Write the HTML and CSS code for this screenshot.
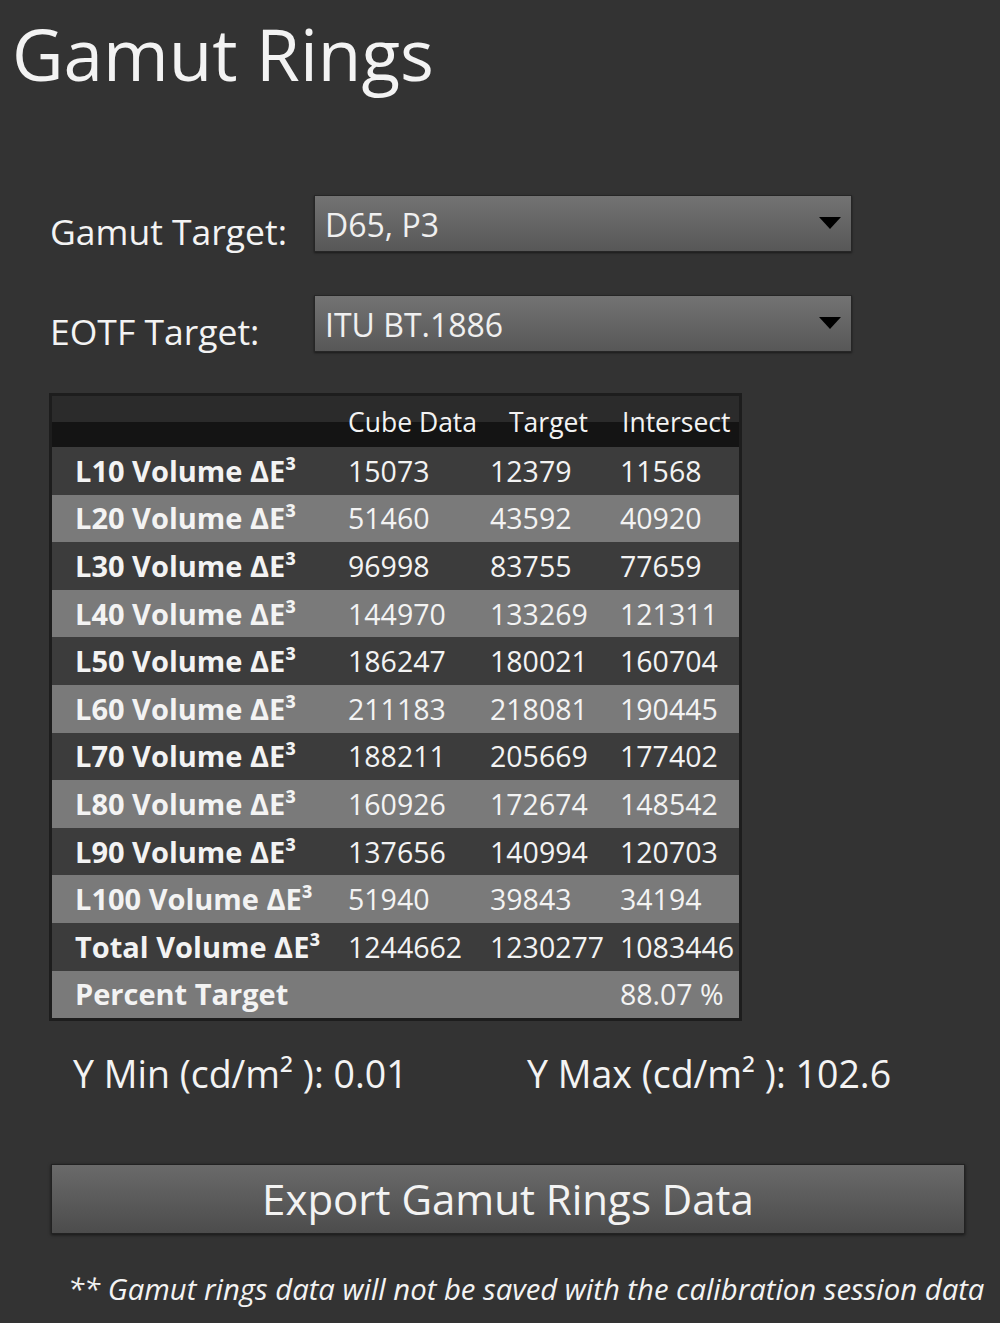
FILE: index.html
```html
<!DOCTYPE html>
<html>
<head>
<meta charset="utf-8">
<link rel="stylesheet" href="styles.css">
</head>
<body>
<div class="page">
  <h1 class="title">Gamut Rings</h1>

  <div class="form">
    <div class="form-row">
      <div class="label">Gamut Target:</div>
      <div class="select">
        <span class="select-text">D65, P3</span>
        <svg class="arrow" width="22" height="12" viewBox="0 0 22 12"><polygon points="0,0 22,0 11,12" fill="#000"/></svg>
      </div>
    </div>
    <div class="form-row">
      <div class="label">EOTF Target:</div>
      <div class="select">
        <span class="select-text">ITU BT.1886</span>
        <svg class="arrow" width="22" height="12" viewBox="0 0 22 12"><polygon points="0,0 22,0 11,12" fill="#000"/></svg>
      </div>
    </div>
  </div>

  <div class="grid-table">
    <div class="row head">
      <span></span><span class="h1">Cube Data</span><span class="h2">Target</span><span class="h3">Intersect</span>
    </div>
    <div class="row dark"><span class="name">L10 Volume ΔE³</span><span>15073</span><span>12379</span><span>11568</span></div>
    <div class="row light"><span class="name">L20 Volume ΔE³</span><span>51460</span><span>43592</span><span>40920</span></div>
    <div class="row dark"><span class="name">L30 Volume ΔE³</span><span>96998</span><span>83755</span><span>77659</span></div>
    <div class="row light"><span class="name">L40 Volume ΔE³</span><span>144970</span><span>133269</span><span>121311</span></div>
    <div class="row dark"><span class="name">L50 Volume ΔE³</span><span>186247</span><span>180021</span><span>160704</span></div>
    <div class="row light"><span class="name">L60 Volume ΔE³</span><span>211183</span><span>218081</span><span>190445</span></div>
    <div class="row dark"><span class="name">L70 Volume ΔE³</span><span>188211</span><span>205669</span><span>177402</span></div>
    <div class="row light"><span class="name">L80 Volume ΔE³</span><span>160926</span><span>172674</span><span>148542</span></div>
    <div class="row dark"><span class="name">L90 Volume ΔE³</span><span>137656</span><span>140994</span><span>120703</span></div>
    <div class="row light"><span class="name">L100 Volume ΔE³</span><span>51940</span><span>39843</span><span>34194</span></div>
    <div class="row dark"><span class="name">Total Volume ΔE³</span><span>1244662</span><span>1230277</span><span>1083446</span></div>
    <div class="row light"><span class="name">Percent Target</span><span></span><span></span><span>88.07 %</span></div>
  </div>

  <div class="yrow">
    <span class="ymin">Y Min (cd/m² ): 0.01</span>
    <span class="ymax">Y Max (cd/m² ): 102.6</span>
  </div>

  <div class="button">Export Gamut Rings Data</div>

  <p class="note">** Gamut rings data will not be saved with the calibration session data</p>
</div>
</body>
</html>
```

FILE: styles.css
```css
html, body {
  margin: 0;
  padding: 0;
}
body {
  background: #333333;
  color: #f3f3f3;
  font-family: "Open Sans", "Noto Sans", sans-serif;
  width: 1000px;
  height: 1323px;
  overflow: hidden;
}
.page {
  display: flex;
  flex-direction: column;
}
.title {
  margin: 18px 0 0 12px;
  font-size: 71px;
  font-weight: 400;
  line-height: 72px;
  height: 72px;
}
.form {
  margin: 105px 0 0 50px;
  display: flex;
  flex-direction: column;
  gap: 43px;
}
.form-row {
  display: flex;
  align-items: center;
  height: 57px;
}
.label {
  width: 264px;
  font-size: 35.5px;
  line-height: 40px;
  padding-top: 14px;
}
.select {
  width: 538px;
  height: 57px;
  box-sizing: border-box;
  border: 1px solid #262626;
  background: linear-gradient(#737373, #575757);
  display: flex;
  align-items: center;
  justify-content: space-between;
  padding: 0 10px 0 10px;
  box-shadow: 0 1px 2px rgba(0,0,0,0.5);
}
.select-text {
  font-size: 32px;
  line-height: 40px;
  color: #f0f0f0;
  margin-top: 2px;
}
.arrow {
  margin-top: -2px;
}
.grid-table {
  margin: 41px 0 0 49px;
  width: 693px;
  border: 3px solid #1d1d1d;
  box-sizing: border-box;
  display: flex;
  flex-direction: column;
}
.row {
  display: grid;
  grid-template-columns: 273px 142px 130px 1fr;
  padding-left: 23px;
  height: 47.6px;
  align-items: center;
  font-size: 28.5px;
  line-height: 32px;
  white-space: nowrap;
}
.row.head {
  height: 51px;
  background: linear-gradient(#2b2b2b 0, #2b2b2b 51%, #141414 51%, #141414 100%);
  font-size: 26.5px;
  align-items: end;
  padding-bottom: 9px;
  box-sizing: border-box;
}
.h2 { padding-left: 19px; }
.h3 { padding-left: 2px; }
.row.dark { background: #3c3c3c; }
.row.light { background: #7a7a7a; }
.name {
  font-weight: 700;
  font-size: 29px;
}
.yrow {
  margin: 29px 0 0 73px;
  display: flex;
  font-size: 37.5px;
  line-height: 48px;
  height: 48px;
}
.ymin { width: 454px; }
.button {
  margin: 66px 0 0 51px;
  width: 914px;
  height: 70px;
  box-sizing: border-box;
  border: 1px solid #222;
  background: linear-gradient(#6a6a6a, #4c4c4c);
  display: flex;
  align-items: center;
  justify-content: center;
  font-size: 42px;
  line-height: 50px;
  color: #f3f3f3;
  box-shadow: 0 1px 3px rgba(0,0,0,0.6);
}
.note {
  margin: 35px 0 0 68px;
  font-size: 29.3px;
  line-height: 40px;
  font-style: italic;
  white-space: nowrap;
}
```
